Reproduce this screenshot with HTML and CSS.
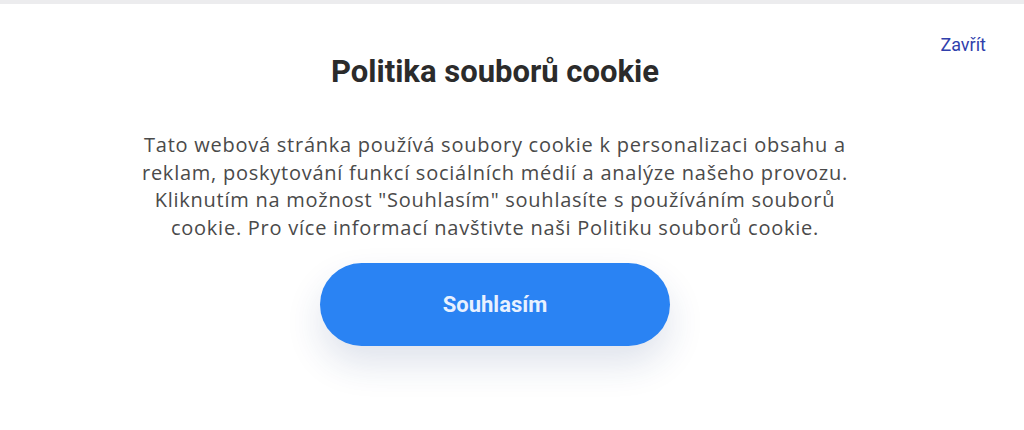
FILE: index.html
```html
<!DOCTYPE html>
<html lang="cs">
<head>
    <meta charset="UTF-8">
    <meta name="viewport" content="width=device-width, initial-scale=1.0">
    <title>Politika souborů cookie</title>
    <link rel="stylesheet" href="styles.css">
</head>
<body>
    <div class="topbar"></div>
    <div class="cookie-modal">
        <a class="close-link" href="#">Zavřít</a>
        <h1>Politika souborů cookie</h1>
        <p class="cookie-text">
            Tato webová stránka používá soubory cookie k personalizaci obsahu a<br>
            reklam, poskytování funkcí sociálních médií a analýze našeho provozu.<br>
            Kliknutím na možnost "Souhlasím" souhlasíte s používáním souborů<br>
            cookie. Pro více informací navštivte naši Politiku souborů cookie.
        </p>
        <button class="accept-button">Souhlasím</button>
    </div>
</body>
</html>
```

FILE: styles.css
```css
body {
    margin: 0;
    background-color: #fff;
}

.topbar {
    height: 4px;
    background-color: #ececee;
}

.cookie-modal {
    position: relative;
    display: flex;
    flex-direction: column;
    align-items: center;
    min-height: 420px;
    box-sizing: border-box;
    padding-top: 50px;
    padding-right: 34px;
}

.close-link {
    position: absolute;
    top: 30px;
    right: 38px;
    font-family: Roboto, sans-serif;
    font-size: 18px;
    color: #3040ac;
    text-decoration: none;
}

h1 {
    margin: 0;
    font-family: Roboto, sans-serif;
    font-size: 31px;
    line-height: 36px;
    font-weight: 700;
    color: #2b2b2b;
}

.cookie-text {
    margin: 41px 0 0;
    font-family: "Open Sans", sans-serif;
    font-size: 20px;
    line-height: 27.5px;
    letter-spacing: 0.75px;
    color: #4a4a4a;
    text-align: center;
}

.accept-button {
    margin-top: 22px;
    width: 350px;
    height: 83px;
    border: none;
    border-radius: 42px;
    background-color: #2a83f3;
    color: #e8f1ff;
    font-family: Roboto, sans-serif;
    font-size: 22px;
    font-weight: 700;
    cursor: pointer;
    box-shadow: 0 18px 36px rgba(30, 60, 120, 0.14);
}
```
